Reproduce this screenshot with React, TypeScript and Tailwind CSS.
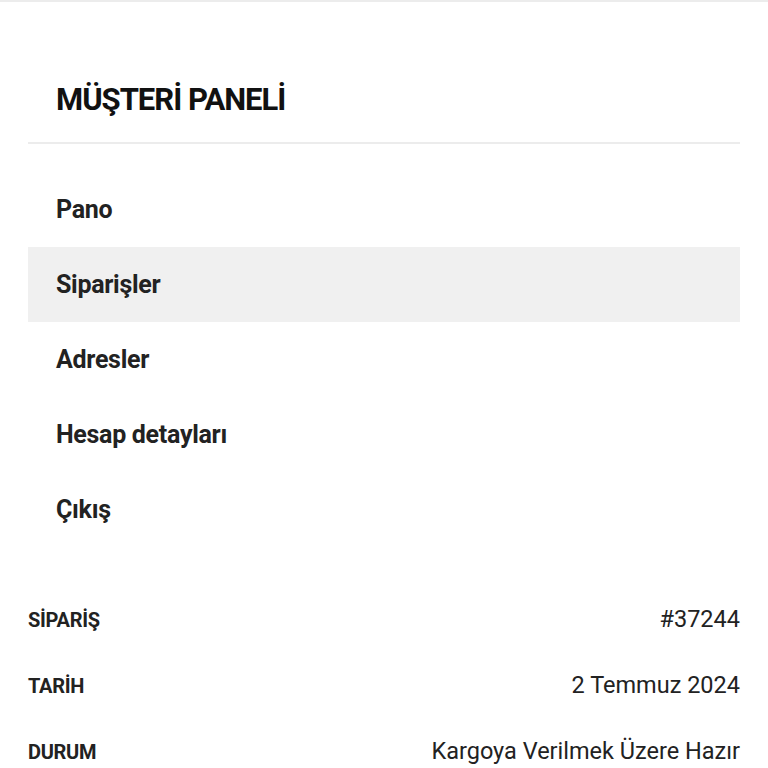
const FONT = { fontFamily: '"Liberation Sans Narrow", "Roboto", "Noto Sans", sans-serif' };

const MENU = ["Pano", "Siparişler", "Adresler", "Hesap detayları", "Çıkış"];
const ACTIVE = "Siparişler";

const DETAILS = [
  { label: "SİPARİŞ", value: "#37244" },
  { label: "TARİH", value: "2 Temmuz 2024" },
  { label: "DURUM", value: "Kargoya Verilmek Üzere Hazır" },
];

export default function App() {
  return (
    <div className="min-h-screen bg-white border-t-2 border-[#ececec]" style={FONT}>
      <div className="px-7">
        <div className="pt-[78px] pb-[22px] px-7 border-b-2 border-[#ececec]">
          <h1 className="text-[31px] leading-[40px] font-bold tracking-[-1px] text-[#111]">MÜŞTERİ PANELİ</h1>
        </div>

        <ul className="mt-7">
          {MENU.map((item) => (
            <li
              key={item}
              className={`h-[75px] flex items-center px-7 text-[25px] font-bold tracking-[-0.3px] text-[#222] ${item === ACTIVE ? "bg-[#f0f0f0]" : ""}`}
            >
              {item}
            </li>
          ))}
        </ul>

        <div className="mt-[40px]">
          {DETAILS.map((d) => (
            <div key={d.label} className="h-[66px] flex items-center justify-between">
              <span className="text-[20px] font-bold tracking-[-0.3px] text-[#222]">{d.label}</span>
              <span className="text-[23.5px] text-[#222]">{d.value}</span>
            </div>
          ))}
        </div>
      </div>
    </div>
  );
}
